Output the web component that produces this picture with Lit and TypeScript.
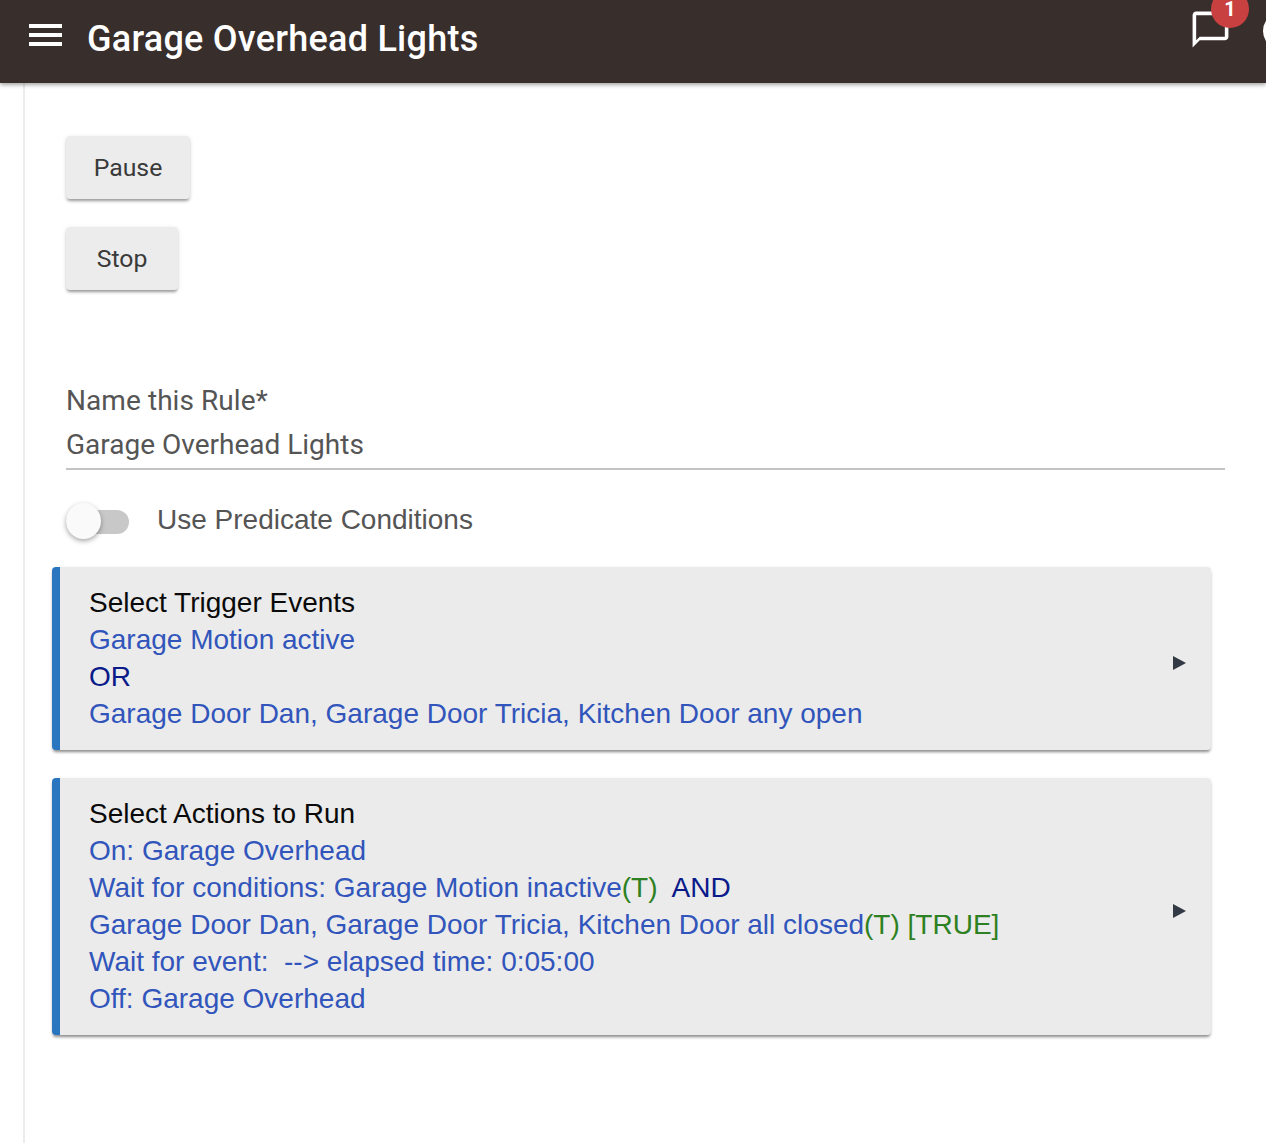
import { LitElement, html, css } from "lit";
import { customElement } from "lit/decorators.js";

@customElement("app-root")
export class AppRoot extends LitElement {
  static styles = css`
    :host { display: block; width: 1266px; height: 1143px; overflow: hidden; background: #fff; font-family: "Liberation Sans", Arial, sans-serif; position: relative; }
    .bar { height: 83px; background: #382e2c; color: #fff; display: flex; align-items: center; position: relative; z-index: 2; box-shadow: 0 2px 4px rgba(0,0,0,.35); }
    .menu { margin-left: 29px; width: 33px; height: 22px; display: flex; flex-direction: column; justify-content: space-between; margin-top: -13px; }
    .menu i { display: block; height: 4px; background: #fff; }
    .title { margin-left: 25px; font: 500 36px/40px Roboto, sans-serif; letter-spacing: 0.25px; margin-top: -6px; white-space: nowrap; }
    .chat { position: absolute; left: 1189px; top: 8px; width: 43px; height: 43px; }
    .badge { position: absolute; left: 1211px; top: -10px; width: 38px; height: 38px; border-radius: 50%; background: #c94040; color: #fff; font: 700 20px/38px Roboto, sans-serif; text-align: center; }
    .ring { position: absolute; left: 1263px; top: 12px; width: 30px; height: 30px; border: 4px solid #fff; border-radius: 50%; }
    .main { position: absolute; left: 23px; top: 83px; right: 0; bottom: 0; border-left: 2px solid #ececec; padding: 53px 0 0 41px; }
    .btn { display: flex; align-items: center; justify-content: center; height: 63px; padding-top: 1px; border-radius: 4px; background: #ececec; color: #3a3a3a; font: 450 24.8px/1 Roboto, sans-serif; box-shadow: 0 3px 3px -1px rgba(0,0,0,.35), 0 1px 5px rgba(0,0,0,.1); box-sizing: border-box; }
    .pause { width: 124px; }
    .stop { width: 112px; margin-top: 28px; }
    .label { margin-top: 95px; font: 400 28px/32px Roboto, sans-serif; letter-spacing: 0.07px; color: #555; }
    .input { margin-top: 16px; width: 1159px; height: 37px; box-sizing: border-box; font: 400 28px/24px Roboto, sans-serif; color: #555; border-bottom: 2px solid #c4c4c4; }
    .switch-row { display: flex; align-items: center; margin-top: 30px; height: 40px; }
    .switch { position: relative; width: 63px; height: 24px; border-radius: 12px; background: #c8c8c8; top: 2px; }
    .knob { position: absolute; left: 0; top: -7px; width: 35px; height: 36px; border-radius: 50%; background: #fafafa; box-shadow: 0 2px 5px rgba(0,0,0,.35); }
    .switch-label { margin-left: 28px; font: 400 28px/32px "Liberation Sans", Arial, sans-serif; color: #555; }
    .card { margin-left: -14px; width: 1159px; box-sizing: border-box; background: #ebebeb; border-left: 8px solid #2a75c0; border-radius: 4px; padding: 17px 0 18px 29px; font-size: 28px; line-height: 37px; color: #3155bb; position: relative; box-shadow: 0 3px 3px -1px rgba(0,0,0,.42), 0 1px 4px rgba(0,0,0,.08); }
    .first { margin-top: 27px; }
    .second { margin-top: 28px; }
    .head { color: #0a0a0a; }
    .navy { color: #0a1a8a; }
    .green { color: #2e8122; }
    .row { white-space: pre; }
    .arrow { position: absolute; right: 25px; top: 50%; margin-top: -3px; width: 0; height: 0; border-left: 13px solid #333a45; border-top: 7.5px solid transparent; border-bottom: 7.5px solid transparent; }
  `;

  render() {
    return html`
      <div class="bar">
        <div class="menu"><i></i><i></i><i></i></div>
        <div class="title">Garage Overhead Lights</div>
        <svg class="chat" viewBox="0 0 24 24" fill="#fff"><path d="M20 2H4c-1.1 0-2 .9-2 2v18l4-4h14c1.1 0 2-.9 2-2V4c0-1.1-.9-2-2-2zm0 14H6l-2 2V4h16v12z"/></svg>
        <div class="badge">1</div>
        <div class="ring"></div>
      </div>
      <div class="main">
        <div class="btn pause">Pause</div>
        <div class="btn stop">Stop</div>
        <div class="label">Name this Rule*</div>
        <div class="input">Garage Overhead Lights</div>
        <div class="switch-row">
          <div class="switch"><div class="knob"></div></div>
          <div class="switch-label">Use Predicate Conditions</div>
        </div>
        <div class="card first">
          <div class="row head">Select Trigger Events</div>
          <div class="row">Garage Motion active</div>
          <div class="row navy">OR</div>
          <div class="row">Garage Door Dan, Garage Door Tricia, Kitchen Door any open</div>
          <div class="arrow"></div>
        </div>
        <div class="card second">
          <div class="row head">Select Actions to Run</div>
          <div class="row">On: Garage Overhead</div>
          <div class="row">Wait for conditions: Garage Motion inactive<span class="green">(T)</span><span class="navy">  AND</span></div>
          <div class="row">Garage Door Dan, Garage Door Tricia, Kitchen Door all closed<span class="green">(T) [TRUE]</span></div>
          <div class="row">Wait for event:  --&gt; elapsed time: 0:05:00</div>
          <div class="row">Off: Garage Overhead</div>
          <div class="arrow"></div>
        </div>
      </div>
    `;
  }
}
